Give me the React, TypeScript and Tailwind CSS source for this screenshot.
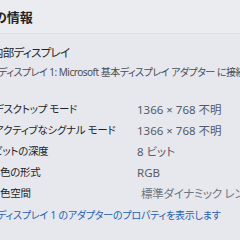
const rows = [
  { label: "デスクトップ モード", value: "1366 × 768 不明", shift: "indent-[-6px]", tone: "text-[#555b68]" },
  { label: "アクティブなシグナル モード", value: "1366 × 768 不明", shift: "indent-[-6px]", tone: "text-[#555b68]" },
  { label: "ビットの深度", value: "8 ビット", shift: "indent-[-7px]", tone: "text-[#555b68]" },
  { label: "色の形式", value: "RGB", shift: "indent-[0px]", tone: "text-[#555b68]" },
  { label: "色空間", value: "標準ダイナミック レンジ", shift: "indent-[0px]", tone: "text-[#6f7480] indent-[4px] tracking-[-0.3px]" },
];

export default function App() {
  return (
    <div
      className="w-[240px] h-[240px] overflow-hidden bg-[#e6e8ed] text-[#232427] [font-feature-settings:'palt']"
      style={{ fontFamily: '"Noto Sans", "Noto Sans CJK JP", sans-serif' }}
    >
      {/* header */}
      <div className="pt-[7px] pb-[6px] border-b border-[#dcdfe5] bg-[#eaecf0]">
        <div className="text-[13px] font-bold leading-[20px] indent-[-6px] whitespace-nowrap">の情報</div>
      </div>

      <div className="mt-[10px] text-[11.5px] leading-[18px] indent-[-8px] tracking-[-0.7px] whitespace-nowrap">内部ディスプレイ</div>
      <div className="mt-[1px] text-[10px] leading-[18px] text-[#4a4d54] indent-[-2px] tracking-[-0.5px] whitespace-nowrap">
        ディスプレイ 1: Microsoft 基本ディスプレイ アダプター に接続されています
      </div>

      {/* details */}
      <div className="mt-[18px] flex flex-col">
        {rows.map((r) => (
          <div key={r.label} className="flex h-[21px] items-center whitespace-nowrap">
            <span className={`w-[137px] shrink-0 text-[10.5px] tracking-[-0.3px] ${r.shift}`}>{r.label}</span>
            <span className={`text-[11.5px] ${r.tone}`}>{r.value}</span>
          </div>
        ))}
      </div>

      <div className="mt-[1px] h-[21px] flex items-center text-[10px] text-[#1f5fb0] indent-[-3px] tracking-[-0.2px] whitespace-nowrap">
        ディスプレイ 1 のアダプターのプロパティを表示します
      </div>
    </div>
  );
}
